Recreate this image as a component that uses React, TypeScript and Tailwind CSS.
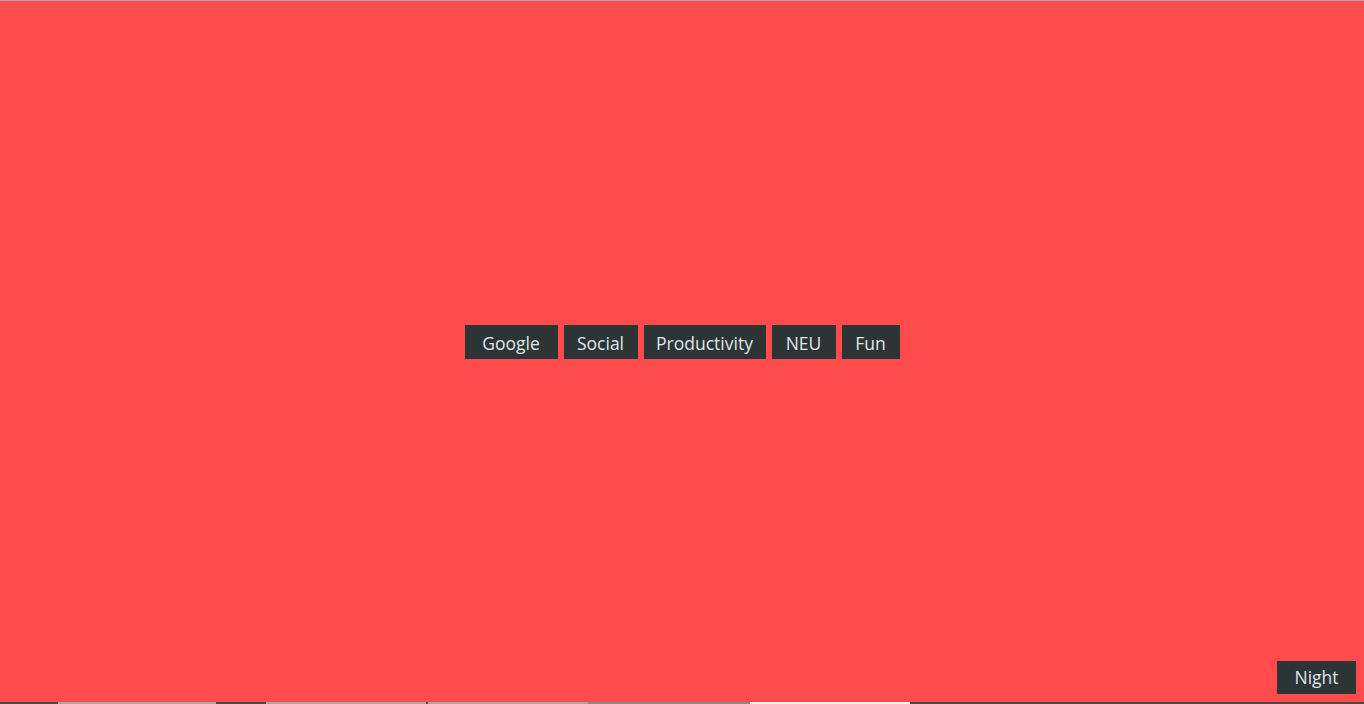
import React from "react";

const links = [
  { label: "Google", w: "w-[93px]" },
  { label: "Social", w: "w-[74px]" },
  { label: "Productivity", w: "w-[122px]" },
  { label: "NEU", w: "w-[64px]" },
  { label: "Fun", w: "w-[58px]" },
];

// strip of the next section peeking in at the very bottom
const strip = [
  { w: "w-[58px]", c: "bg-[#4a4a4a]" },
  { w: "w-[158px]", c: "bg-[#a8a8a8]" },
  { w: "w-[50px]", c: "bg-[#4a4a4a]" },
  { w: "w-[160px]", c: "bg-[#a8a8a8]" },
  { w: "w-[2px]", c: "bg-[#4a4a4a]" },
  { w: "w-[160px]", c: "bg-[#a8a8a8]" },
  { w: "w-[162px]", c: "bg-[#8a8a8a]" },
  { w: "w-[160px]", c: "bg-[#f2f2f2]" },
  { w: "flex-1", c: "bg-[#4a4a4a]" },
];

export default function App() {
  return (
    <div className="relative h-[704px] w-full overflow-hidden bg-[#ff4b4b] font-['Open_Sans',sans-serif]">
      <div className="h-px w-full bg-[#a9a9a9]" />
      <div className="flex h-[701px] flex-col items-center pt-[324px]">
        <div className="flex gap-[6px]">
          {links.map((l) => (
            <button
              key={l.label}
              className={`${l.w} h-[34px] bg-[#2d3436] pt-[1px] text-center text-[17.5px] leading-[34px] text-[#dfe6e9]`}
            >
              {l.label}
            </button>
          ))}
        </div>
      </div>
      <div className="flex h-[2px] w-full">
        {strip.map((s, i) => (
          <div key={i} className={`${s.w} ${s.c} h-full`} />
        ))}
      </div>
      <button className="absolute right-[8px] top-[661px] h-[33px] w-[79px] bg-[#2d3436] text-[17.5px] leading-[33px] text-[#dfe6e9]">
        Night
      </button>
    </div>
  );
}
